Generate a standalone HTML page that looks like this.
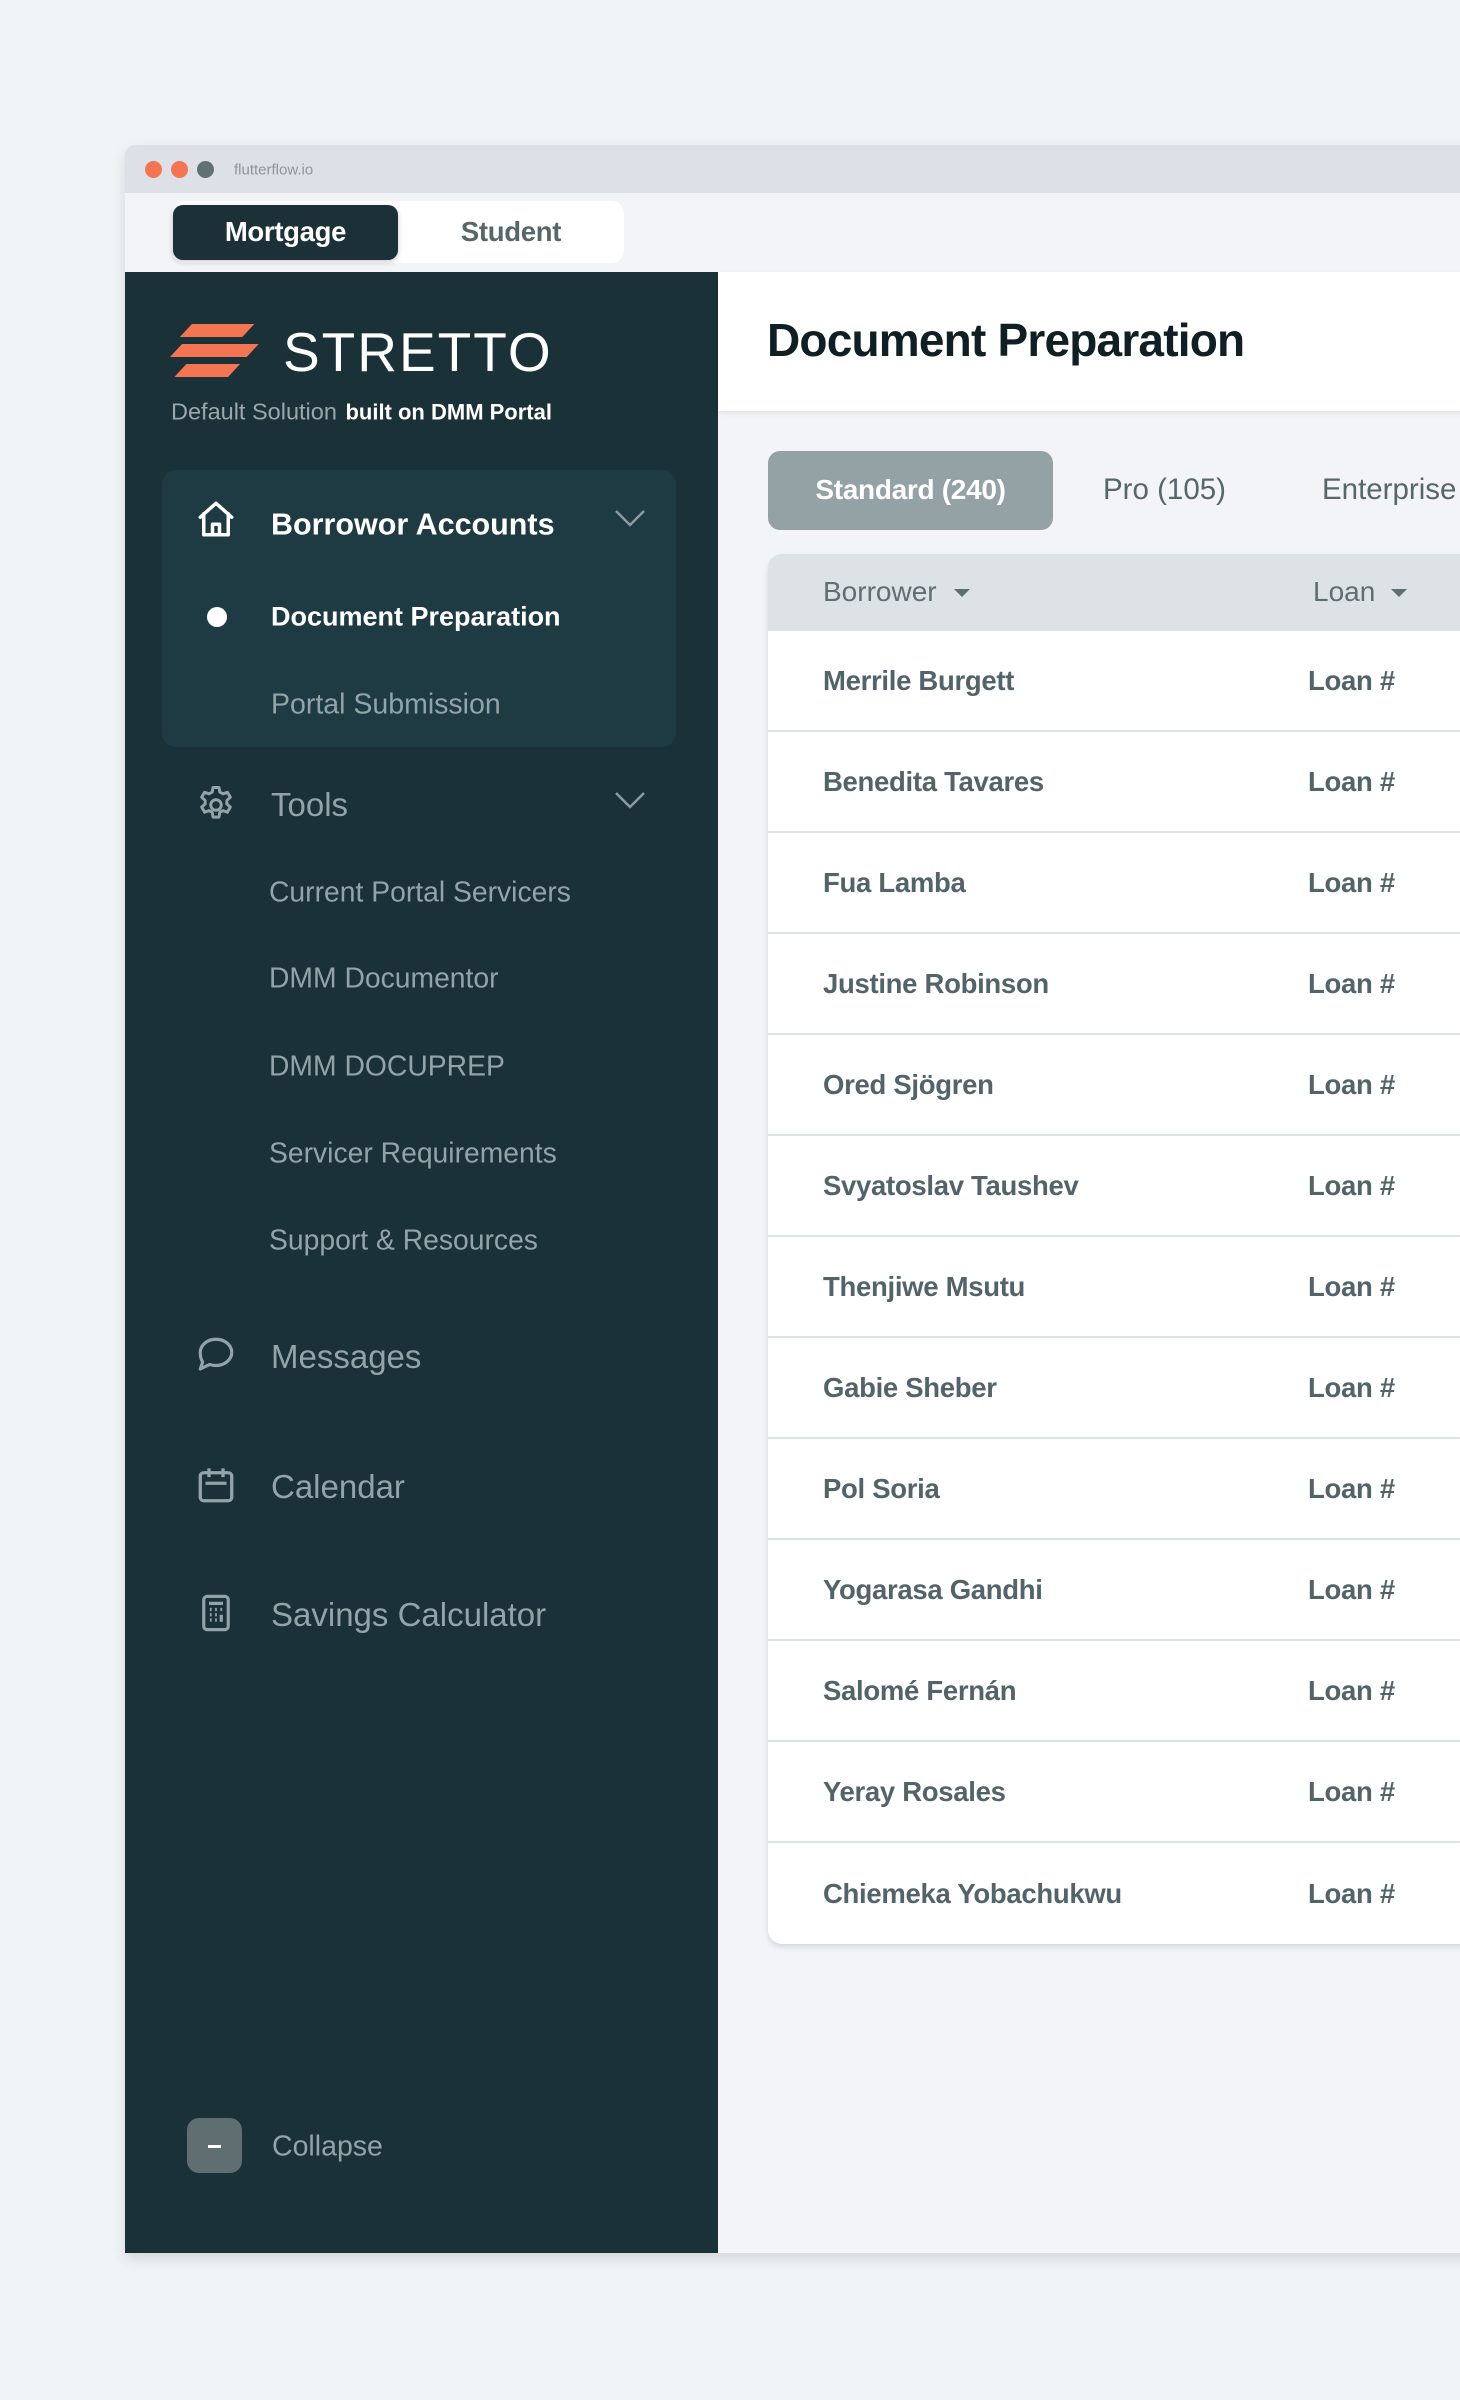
<!DOCTYPE html>
<html><head><meta charset="utf-8"><style>
*{margin:0;padding:0;box-sizing:border-box}
body{width:1460px;height:2400px;background:#f0f4f7;font-family:"Liberation Sans",sans-serif;position:relative;overflow:hidden}
.a{position:absolute;white-space:nowrap}
.frame{position:absolute;left:125px;top:145px;width:1400px;height:2108px;background:#f2f4f8;border-radius:10px 0 0 0;box-shadow:0 6px 14px rgba(0,0,0,.12);overflow:hidden}
.v{transform:translateY(-50%)}
.side{color:#93a4a8}
.row{position:absolute;left:0;width:800px;height:101px;border-bottom:2px solid #dde3e8}
.row span{position:absolute;top:50%;transform:translateY(-50%);font-size:27.5px;font-weight:bold;color:#52646a;letter-spacing:-0.3px}
</style></head><body>
<div class="frame">
  <div class="a" style="left:0;top:0;width:1400px;height:48px;background:#dde1e7"></div>
  <div class="a" style="left:20px;top:16px;width:17px;height:17px;border-radius:50%;background:#f47552"></div>
  <div class="a" style="left:46px;top:16px;width:17px;height:17px;border-radius:50%;background:#f47552"></div>
  <div class="a" style="left:72px;top:16px;width:17px;height:17px;border-radius:50%;background:#617173"></div>
  <div class="a v" style="left:109px;top:25px;font-size:15px;color:#8d959b">flutterflow.io</div>
  <div class="a" style="left:48px;top:56px;width:451px;height:62px;border-radius:12px;background:#fff"></div>
  <div class="a" style="left:48px;top:60px;width:225px;height:55px;border-radius:10px;background:#1b3037;box-shadow:0 2px 6px rgba(0,0,0,.2)"></div>
  <div class="a v" style="left:48px;width:225px;text-align:center;top:87px;font-size:27.5px;font-weight:bold;color:#fff;letter-spacing:-0.3px">Mortgage</div>
  <div class="a v" style="left:273px;width:226px;text-align:center;top:87px;font-size:27.5px;font-weight:bold;color:#56666a;letter-spacing:-0.3px">Student</div>

  <!-- sidebar -->
  <div class="a" style="left:0;top:127px;width:593px;height:1981px;background:#1a3138"></div>
  <svg class="a" style="left:45px;top:179px" width="92" height="54" viewBox="0 0 84 54" preserveAspectRatio="none">
    <polygon points="20,0 77,0 66,13 9,13" fill="#f47552"/>
    <polygon points="11,20 81,20 70,33 0,33" fill="#f47552"/>
    <polygon points="15,40 64,40 53,53 4,53" fill="#f47552"/>
  </svg>
  <div class="a v" style="left:158px;top:207px;font-size:55px;color:#fff;letter-spacing:2px">STRETTO</div>
  <div class="a v" style="left:46px;top:267px;font-size:23.5px;color:#9aa8ab">Default Solution <b style="color:#fff;margin-left:2px;font-size:22px">built on DMM Portal</b></div>

  <div class="a" style="left:37px;top:325px;width:514px;height:277px;border-radius:14px;background:#1e3a42"></div>
  <svg class="a" style="left:70px;top:353px" width="42" height="42" viewBox="0 0 24 24" fill="none" stroke="#fff" stroke-width="2" stroke-linejoin="round" stroke-linecap="round"><path d="M3 11L12 3l9 8M5 9v12h14V9M10 21v-6h4v6"/></svg>
  <div class="a v" style="left:146px;top:380px;font-size:30.5px;font-weight:bold;color:#fff">Borrowor Accounts</div>
  <svg class="a" style="left:489px;top:363px" width="32" height="20" viewBox="0 0 32 20" fill="none" stroke="#8b9ca0" stroke-width="2.5"><path d="M2 3l14 14 14-14"/></svg>
  <div class="a" style="left:82px;top:462px;width:20px;height:20px;border-radius:50%;background:#fff"></div>
  <div class="a v" style="left:146px;top:472px;font-size:27px;font-weight:bold;color:#fff">Document Preparation</div>
  <div class="a v side" style="left:146px;top:560px;font-size:28.5px">Portal Submission</div>

  <svg class="a" style="left:70px;top:639px" width="42" height="42" viewBox="0 0 24 24" fill="none" stroke="#93a4a8" stroke-width="1.7" stroke-linejoin="round"><circle cx="12" cy="12" r="3"/><path d="M10.3 2h3.4l.5 2.6 1.8 1 2.5-.9 1.7 2.9-2 1.8v2l2 1.8-1.7 2.9-2.5-.9-1.8 1-.5 2.7h-3.4l-.5-2.7-1.8-1-2.5.9-1.7-2.9 2-1.8v-2l-2-1.8 1.7-2.9 2.5.9 1.8-1z"/></svg>
  <div class="a v side" style="left:146px;top:660px;font-size:33px">Tools</div>
  <svg class="a" style="left:489px;top:645px" width="32" height="20" viewBox="0 0 32 20" fill="none" stroke="#8b9ca0" stroke-width="2.5"><path d="M2 3l14 14 14-14"/></svg>

  <div class="a v side" style="left:144px;top:747px;font-size:28.3px">Current Portal Servicers</div>
  <div class="a v side" style="left:144px;top:833px;font-size:28.3px">DMM Documentor</div>
  <div class="a v side" style="left:144px;top:921px;font-size:28.3px">DMM DOCUPREP</div>
  <div class="a v side" style="left:144px;top:1008px;font-size:28.3px">Servicer Requirements</div>
  <div class="a v side" style="left:144px;top:1095px;font-size:28.3px">Support &amp; Resources</div>

  <svg class="a" style="left:70px;top:1189px" width="42" height="42" viewBox="0 0 24 24" fill="none" stroke="#93a4a8" stroke-width="1.8" stroke-linejoin="round"><path d="M12 3c5 0 9 3.4 9 7.5S17 18 12 18c-1.3 0-2.5-.2-3.6-.6L3 20l1.4-4C3.5 14.7 3 12.7 3 10.5 3 6.4 7 3 12 3z"/></svg>
  <div class="a v side" style="left:146px;top:1212px;font-size:33px">Messages</div>
  <svg class="a" style="left:70px;top:1319px" width="42" height="42" viewBox="0 0 24 24" fill="none" stroke="#93a4a8" stroke-width="1.9"><rect x="3" y="5" width="18" height="16" rx="2"/><path d="M8 2.5v5M16 2.5v5M6 11h12"/></svg>
  <div class="a v side" style="left:146px;top:1342px;font-size:33px">Calendar</div>
  <svg class="a" style="left:70px;top:1447px" width="42" height="42" viewBox="0 0 24 24" fill="none" stroke="#93a4a8" stroke-width="1.8"><rect x="5" y="2.5" width="14" height="19" rx="2"/><path d="M8 6.5h8M8.5 10h1M11.5 10h1M14.5 10h1M8.5 13h1M11.5 13h1M8.5 16h1M11.5 16h1M15 13v4"/></svg>
  <div class="a v side" style="left:146px;top:1470px;font-size:33px">Savings Calculator</div>

  <div class="a" style="left:62px;top:1973px;width:55px;height:55px;border-radius:12px;background:#5f6f71"></div>
  <div class="a" style="left:83px;top:2000px;width:13px;height:3px;background:#fff"></div>
  <div class="a v side" style="left:147px;top:2002px;font-size:28.5px">Collapse</div>

  <!-- main -->
  <div class="a" style="left:593px;top:127px;width:807px;height:139px;background:#fff;box-shadow:0 2px 5px rgba(0,0,0,.08)"></div>
  <div class="a v" style="left:642px;top:195px;font-size:46px;font-weight:bold;color:#0f1f24;letter-spacing:-0.8px">Document Preparation</div>

  <div class="a" style="left:643px;top:306px;width:285px;height:79px;border-radius:12px;background:#95a2a5"></div>
  <div class="a v" style="left:643px;width:285px;text-align:center;top:345px;font-size:28px;font-weight:bold;color:#fff;letter-spacing:-0.3px">Standard (240)</div>
  <div class="a v" style="left:978px;top:345px;font-size:29.5px;color:#56666a">Pro (105)</div>
  <div class="a v" style="left:1197px;top:345px;font-size:29.5px;color:#56666a">Enterprise</div>

  <div class="a" style="left:643px;top:409px;width:800px;height:1390px;border-radius:14px 0 0 14px;background:#fff;box-shadow:0 3px 6px rgba(0,0,0,.12);overflow:hidden">
    <div class="a" style="left:0;top:0;width:800px;height:77px;background:#dde2e7"></div>
    <div class="a v" style="left:55px;top:38px;font-size:28px;color:#5f6e72">Borrower</div>
    <div class="a" style="left:186px;top:35px;border:8px solid transparent;border-top:8px solid #5f6e72;border-bottom:0"></div>
    <div class="a v" style="left:545px;top:38px;font-size:28px;color:#5f6e72">Loan</div>
    <div class="a" style="left:623px;top:35px;border:8px solid transparent;border-top:8px solid #5f6e72;border-bottom:0"></div>
    <div class="row" style="top:77px"><span style="left:55px">Merrile Burgett</span><span style="left:540px">Loan #</span></div>
    <div class="row" style="top:178px"><span style="left:55px">Benedita Tavares</span><span style="left:540px">Loan #</span></div>
    <div class="row" style="top:279px"><span style="left:55px">Fua Lamba</span><span style="left:540px">Loan #</span></div>
    <div class="row" style="top:380px"><span style="left:55px">Justine Robinson</span><span style="left:540px">Loan #</span></div>
    <div class="row" style="top:481px"><span style="left:55px">Ored Sjögren</span><span style="left:540px">Loan #</span></div>
    <div class="row" style="top:582px"><span style="left:55px">Svyatoslav Taushev</span><span style="left:540px">Loan #</span></div>
    <div class="row" style="top:683px"><span style="left:55px">Thenjiwe Msutu</span><span style="left:540px">Loan #</span></div>
    <div class="row" style="top:784px"><span style="left:55px">Gabie Sheber</span><span style="left:540px">Loan #</span></div>
    <div class="row" style="top:885px"><span style="left:55px">Pol Soria</span><span style="left:540px">Loan #</span></div>
    <div class="row" style="top:986px"><span style="left:55px">Yogarasa Gandhi</span><span style="left:540px">Loan #</span></div>
    <div class="row" style="top:1087px"><span style="left:55px">Salomé Fernán</span><span style="left:540px">Loan #</span></div>
    <div class="row" style="top:1188px"><span style="left:55px">Yeray Rosales</span><span style="left:540px">Loan #</span></div>
    <div class="row" style="top:1289px;border-bottom:0"><span style="left:55px">Chiemeka Yobachukwu</span><span style="left:540px">Loan #</span></div>
  </div>
</div>
</body></html>
